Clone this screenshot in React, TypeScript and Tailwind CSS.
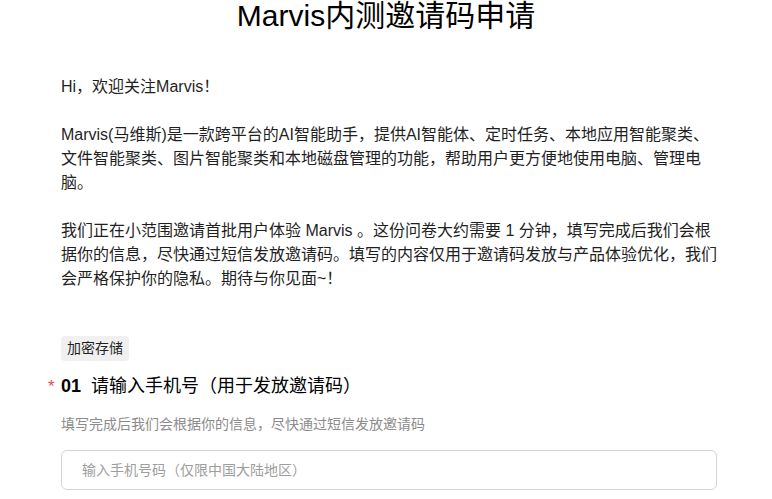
const FONT = "font-['Liberation_Sans','Noto_Sans_CJK_SC',sans-serif]";

const App = () => {
  return (
    <div className={`min-h-screen bg-white ${FONT}`}>
      {/* Title */}
      <h1 className="text-center text-[30px] leading-[32px] font-normal text-black">
        Marvis内测邀请码申请
      </h1>

      <div className="pl-[61px] pr-[55px] pt-[43px]">
        {/* Intro */}
        <div className="space-y-6 text-[16px] leading-6 text-[#1f1f1f]">
          <p>Hi，欢迎关注Marvis！</p>
          <p>
            Marvis(马维斯)是一款跨平台的AI智能助手，提供AI智能体、定时任务、本地应用智能聚类、文件智能聚类、图片智能聚类和本地磁盘管理的功能，帮助用户更方便地使用电脑、管理电脑。
          </p>
          <p>
            我们正在小范围邀请首批用户体验 Marvis 。这份问卷大约需要 1 分钟，填写完成后我们会根据你的信息，尽快通过短信发放邀请码。填写的内容仅用于邀请码发放与产品体验优化，我们会严格保护你的隐私。期待与你见面~！
          </p>
        </div>

        {/* Tag */}
        <div className="mt-[45px]">
          <span className="inline-block rounded bg-[#f0f0f0] px-[6px] text-[14px] leading-[25px] text-[#1f1f1f]">
            加密存储
          </span>
        </div>

        {/* Question */}
        <div className="relative mt-3 flex items-baseline gap-[10px] text-[18px] leading-[26px] text-black">
          <span className="absolute -left-[13px] top-[1px] text-[17px] text-[#e5484d]">*</span>
          <span className="font-bold">01</span>
          <span>请输入手机号（用于发放邀请码）</span>
        </div>
        <p className="mt-[14px] text-[14px] leading-[22px] text-[#8c8c8c]">
          填写完成后我们会根据你的信息，尽快通过短信发放邀请码
        </p>
        <input
          type="text"
          placeholder="输入手机号码（仅限中国大陆地区）"
          className="mt-[15px] h-10 w-full rounded-md border border-[#d4d4d4] px-5 text-[14px] text-[#1f1f1f] outline-none placeholder:text-[#9e9e9e]"
        />
      </div>
    </div>
  );
};

export default App;
